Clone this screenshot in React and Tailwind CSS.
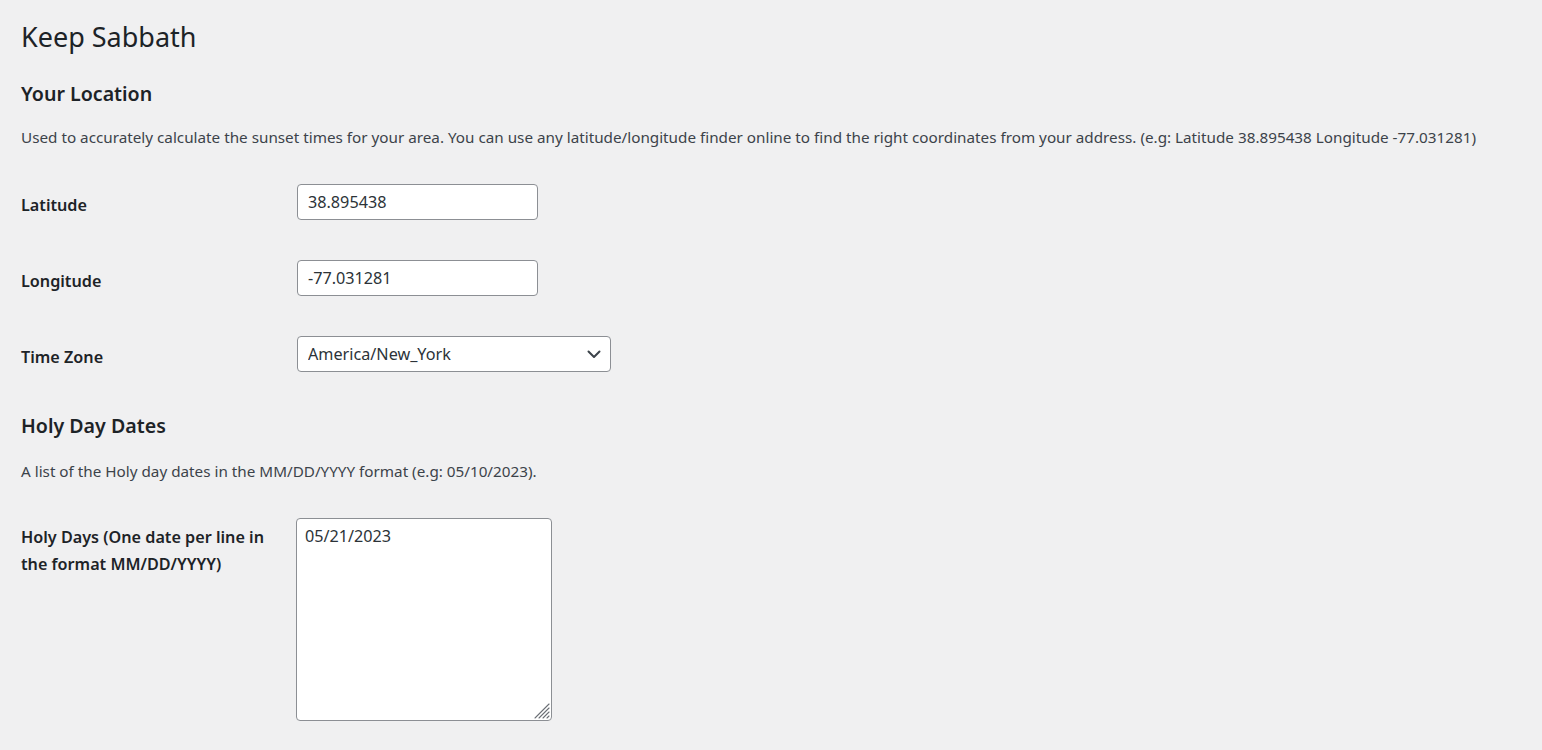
const font = { fontFamily: '"Noto Sans", "Open Sans", sans-serif' };

function Row({ label, children, labelPad = 'pt-[8px]' }) {
  return (
    <div className="flex items-start py-[20px]">
      <div className={`w-[276px] shrink-0 ${labelPad} pr-4`}>
        <span className="block text-[16.2px] font-semibold leading-[27px] text-[#1d2327]">{label}</span>
      </div>
      <div>{children}</div>
    </div>
  );
}

export default function App() {
  const inputCls =
    'h-[36px] rounded-[4px] border border-[#8c8f94] bg-white px-[10px] text-[16.2px] text-[#2c3338] outline-none';

  return (
    <div className="min-h-[750px] bg-[#f0f0f1] pl-[21px] pt-[19px] text-[#1d2327] antialiased" style={font}>
      <h1 className="text-[27px] font-normal leading-[36px]">Keep Sabbath</h1>

      <h2 className="mt-[26px] text-[19.6px] font-semibold leading-[26px]">Your Location</h2>
      <p className="mt-[18px] text-[15.26px] leading-[24px] text-[#3c434a]">
        Used to accurately calculate the sunset times for your area. You can use any latitude/longitude finder online to find the right coordinates from your address. (e.g: Latitude 38.895438 Longitude -77.031281)
      </p>

      <div className="mt-[15px]">
        <Row label="Latitude">
          <input className={`${inputCls} w-[241px]`} defaultValue="38.895438" />
        </Row>
        <Row label="Longitude">
          <input className={`${inputCls} w-[241px]`} defaultValue="-77.031281" />
        </Row>
        <Row label="Time Zone">
          <div className="relative w-[314px]">
            <select className={`${inputCls} w-full appearance-none pr-8`} defaultValue="America/New_York">
              <option>America/New_York</option>
              <option>America/Chicago</option>
              <option>America/Denver</option>
              <option>America/Los_Angeles</option>
            </select>
            <svg
              className="pointer-events-none absolute right-[10px] top-[14px]"
              width="14"
              height="9"
              viewBox="0 0 14 9"
              fill="none"
            >
              <polyline points="1.5,1.5 7,7 12.5,1.5" stroke="#3c434a" strokeWidth="2" strokeLinecap="round" strokeLinejoin="round" />
            </svg>
          </div>
        </Row>
      </div>

      <h2 className="mt-[21px] text-[19.6px] font-semibold leading-[26px]">Holy Day Dates</h2>
      <p className="mt-[20px] text-[15.26px] leading-[24px] text-[#3c434a]">
        A list of the Holy day dates in the MM/DD/YYYY format (e.g: 05/10/2023).
      </p>

      <div className="mt-[15px]">
        <Row label="Holy Days (One date per line in the format MM/DD/YYYY)" labelPad="pt-[6px]">
          <div className="relative -ml-px">
            <textarea
              className="block h-[203px] w-[256px] resize-none rounded-[4px] border border-[#8c8f94] bg-white px-[8px] py-[5px] text-[16.2px] leading-[24px] text-[#2c3338] outline-none"
              defaultValue="05/21/2023"
            />
            <svg className="pointer-events-none absolute bottom-[2px] right-[2px]" width="17" height="17" viewBox="0 0 17 17">
              <g stroke="#6b6f75" strokeWidth="1.1" strokeLinecap="round">
                <line x1="2" y1="16" x2="16" y2="2" />
                <line x1="6" y1="16" x2="16" y2="6" />
                <line x1="10" y1="16" x2="16" y2="10" />
                <line x1="14" y1="16" x2="16" y2="14" />
              </g>
            </svg>
          </div>
        </Row>
      </div>
    </div>
  );
}
